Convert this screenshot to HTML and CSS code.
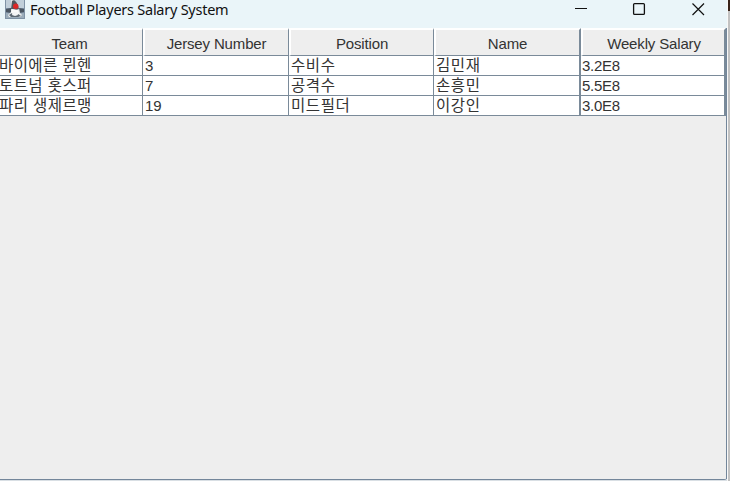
FILE: index.html
```html
<!DOCTYPE html>
<html lang="ko">
<head>
<meta charset="utf-8">
<title>Football Players Salary System</title>
<link rel="stylesheet" href="styles.css">
</head>
<body>
<div class="desktop">
  <main class="window">
    <header class="titlebar">
      <svg class="app-icon" width="20" height="20" viewBox="0 0 20 20">
        <rect width="20" height="19" fill="#7f92a5"/>
        <rect x="1" y="0" width="18" height="8" fill="#c0ced9"/>
        <path d="M1 13h18v5H1z" fill="#9cadbb"/>
        <path d="M1 9l5-1 8 0 5 1v3l-5 1H6l-5-1z" fill="#4a5561"/>
        <path d="M6 0h3l5 8 1 5 2 2-2 2-4-1-4 1H4l-1-2 3-3z" fill="#e9ecee"/>
        <path d="M7 1c2-2 5 0 7 8l-3 1-5-1z" fill="#50575f"/>
        <path d="M7 9l6 1 1 4-4 1-4-1z" fill="#fafafa"/>
        <path d="M4 15l3-2 1 2 5-1 3 2-3 1H6z" fill="#5d6873"/>
        <path d="M8 12h4l1 3-3 1-3-1z" fill="#f4f5f6"/>
        <circle cx="10.7" cy="6.3" r="2.7" fill="#dc2727"/>
      </svg>
      <h1 class="title">Football Players Salary System</h1>
      <svg class="controls" width="132" height="14" viewBox="0 0 132 14">
        <path d="M0 6.5h12" stroke="#111"/>
        <rect x="58.6" y="1.6" width="10.8" height="10.8" rx="1" fill="none" stroke="#111" stroke-width="1.3"/>
        <path d="M117.5 1.5l11.5 11.5M129 1.5L117.5 13" stroke="#111" stroke-width="1.2"/>
      </svg>
    </header>
    <section class="content">
      <div class="grid head">
        <div><span class="h-team">Team</span></div><div><span>Jersey Number</span></div><div><span>Position</span></div><div><span>Name</span></div><div><span>Weekly Salary</span></div>
      </div>
      <div class="grid row">
        <div class="ko team">바이에른 뮌헨</div><div>3</div><div class="ko">수비수</div><div class="ko">김민재</div><div>3.2E8</div>
      </div>
      <div class="grid row">
        <div class="ko team">토트넘 홋스퍼</div><div>7</div><div class="ko">공격수</div><div class="ko">손흥민</div><div>5.5E8</div>
      </div>
      <div class="grid row">
        <div class="ko team">파리 생제르맹</div><div>19</div><div class="ko">미드필더</div><div class="ko">이강인</div><div>3.0E8</div>
      </div>
    </section>
  </main>
  <aside class="behind"></aside>
</div>
</body>
</html>
```

FILE: styles.css
```css
* { box-sizing: border-box; }
body { margin: 0; overflow: hidden; background: #d9dfe4; }
.desktop { display: flex; width: 730px; height: 481px; }
.window { width: 727px; height: 480px; background: #eee; border-bottom: 1px solid #73869a; border-bottom-right-radius: 3px; }
.behind { width: 3px; height: 481px; border-left: 1px solid #f8f8f8; background: linear-gradient(#382319 0 11px, #c2c2c2 11px); }
.titlebar { height: 28px; width: 728px; display: flex; background: #eaf5f9; }
.app-icon { margin-left: 5px; flex: none; }
.title { margin: 0 0 0 5px; width: 545px; font: 400 14.5px/19px "Noto Sans", sans-serif; letter-spacing: -0.25px; color: #111; white-space: nowrap; }
.controls { margin-top: 2px; flex: none; }
.content { height: 451px; border-right: 1px solid #73869a; }
.grid { display: grid; grid-template-columns: 143px 146px 145px 147px 145px; width: 726px; font: 15px "Liberation Sans", "Noto Sans CJK KR", sans-serif; color: #333; }
.grid > div { border-right: 1px solid #7a8a99; border-bottom: 1px solid #7a8a99; white-space: nowrap; }
.grid > div:nth-child(n + 4) { border-right-width: 2px; }
.head > div { height: 28px; background: #eee; border-top: 2px solid #fff; border-left: 2px solid #fff; text-align: center; line-height: 27px; letter-spacing: -0.15px; }
.head > div:first-child { border-left: 0; }
.head > div:nth-child(5) { padding-left: 1px; }
.h-team { margin-left: -3px; }
.row > div { height: 20px; background: #fff; padding-left: 2px; line-height: 20px; letter-spacing: -0.15px; }
.row > div:last-child { padding-left: 1px; letter-spacing: -0.3px; }
.row > .team { padding-left: 0; text-indent: -1px; }
.row > .ko { font-family: "Noto Sans CJK KR", sans-serif; font-size: 15.5px; font-weight: 400; line-height: 17px; letter-spacing: 0.6px; }
.row > .team { letter-spacing: 0.4px; }
```
